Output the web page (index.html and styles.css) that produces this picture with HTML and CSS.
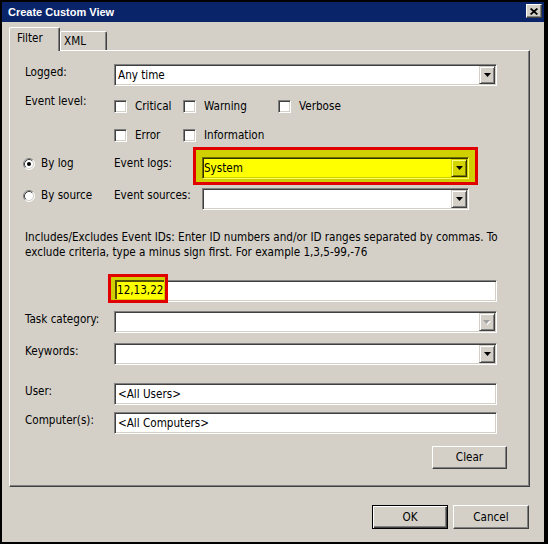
FILE: index.html
```html
<!DOCTYPE html>
<html>
<head>
<meta charset="utf-8">
<title>Create Custom View</title>
<link rel="stylesheet" href="styles.css">
</head>
<body>
<div class="window">
  <div class="titlebar">
    <span class="title">Create Custom View</span>
    <span class="close"><svg width="8" height="7" viewBox="0 0 8 7"><path d="M0.6 0.5L7.4 6.5M7.4 0.5L0.6 6.5" stroke="#000" stroke-width="1.7"/></svg></span>
  </div>
  <div class="tabstrip">
    <div class="tab tab-filter">Filter</div>
    <div class="tab tab-xml">XML</div>
  </div>
  <div class="panel">
    <div class="row r-logged">
      <div class="lbl">Logged:</div>
      <div class="combo w-full"><span class="val">Any time</span><span class="ddbtn"><svg width="7" height="4" viewBox="0 0 7 4"><path d="M0 0H7L3.5 4Z" fill="#000"/></svg></span></div>
    </div>
    <div class="row r-level">
      <div class="lbl lbl-top">Event level:</div>
      <div class="checks">
        <div class="chkrow">
          <div class="chk c1"><span class="box"></span>Critical</div>
          <div class="chk c2"><span class="box"></span>Warning</div>
          <div class="chk"><span class="box"></span>Verbose</div>
        </div>
        <div class="chkrow">
          <div class="chk c1"><span class="box"></span>Error</div>
          <div class="chk c2"><span class="box"></span>Information</div>
        </div>
      </div>
    </div>
    <div class="row r-bylog">
      <div class="radio-lbl rl-log"><svg class="radio" width="12" height="12" viewBox="0 0 12 12"><circle cx="6" cy="6" r="5" fill="#fff"/><path d="M2.11 9.89A5.5 5.5 0 0 1 9.89 2.11" fill="none" stroke="#808080"/><path d="M9.89 2.11A5.5 5.5 0 0 1 2.11 9.89" fill="none" stroke="#fff"/><path d="M2.82 9.18A4.5 4.5 0 0 1 9.18 2.82" fill="none" stroke="#404040"/><path d="M9.18 2.82A4.5 4.5 0 0 1 2.82 9.18" fill="none" stroke="#d4d0c8"/><circle cx="6" cy="6" r="2" fill="#000"/></svg>By log</div>
      <div class="sublbl sl-log">Event logs:</div>
      <div class="hl-box">
        <div class="combo yel"><span class="val">System</span><span class="ddbtn"><svg width="7" height="4" viewBox="0 0 7 4"><path d="M0 0H7L3.5 4Z" fill="#000"/></svg></span></div>
      </div>
    </div>
    <div class="row r-bysrc">
      <div class="radio-lbl rl-src"><svg class="radio" width="12" height="12" viewBox="0 0 12 12"><circle cx="6" cy="6" r="5" fill="#fff"/><path d="M2.11 9.89A5.5 5.5 0 0 1 9.89 2.11" fill="none" stroke="#808080"/><path d="M9.89 2.11A5.5 5.5 0 0 1 2.11 9.89" fill="none" stroke="#fff"/><path d="M2.82 9.18A4.5 4.5 0 0 1 9.18 2.82" fill="none" stroke="#404040"/><path d="M9.18 2.82A4.5 4.5 0 0 1 2.82 9.18" fill="none" stroke="#d4d0c8"/></svg>By source</div>
      <div class="sublbl sl-src">Event sources:</div>
      <div class="combo w-src"><span class="val"></span><span class="ddbtn"><svg width="7" height="4" viewBox="0 0 7 4"><path d="M0 0H7L3.5 4Z" fill="#000"/></svg></span></div>
    </div>
    <p class="desc">Includes/Excludes Event IDs: Enter ID numbers and/or ID ranges separated by commas. To<br>exclude criteria, type a minus sign first. For example 1,3,5-99,-76</p>
    <div class="row r-ids">
      <div class="lbl"></div>
      <div class="field w-full ids">
        <div class="hl-ids"><div class="hl-in"><span>12,13,22</span><span class="caret"></span></div></div>
      </div>
    </div>
    <div class="row r-task">
      <div class="lbl">Task category:</div>
      <div class="combo w-full"><span class="val"></span><span class="ddbtn"><svg width="8" height="5" viewBox="0 0 8 5"><path d="M1 1H8L4.5 5Z" fill="#fff"/><path d="M0 0H7L3.5 4Z" fill="#a0a0a0"/></svg></span></div>
    </div>
    <div class="row r-kw">
      <div class="lbl">Keywords:</div>
      <div class="combo w-full"><span class="val"></span><span class="ddbtn"><svg width="7" height="4" viewBox="0 0 7 4"><path d="M0 0H7L3.5 4Z" fill="#000"/></svg></span></div>
    </div>
    <div class="row r-user">
      <div class="lbl">User:</div>
      <div class="field w-full"><span class="val">&lt;All Users&gt;</span></div>
    </div>
    <div class="row r-comp">
      <div class="lbl">Computer(s):</div>
      <div class="field w-full"><span class="val">&lt;All Computers&gt;</span></div>
    </div>
    <div class="row r-clear">
      <div class="btn btn-clear">Clear</div>
    </div>
  </div>
  <div class="footer">
    <div class="btn btn-default">OK</div>
    <div class="btn">Cancel</div>
  </div>
</div>
</body>
</html>
```
FILE: styles.css
```css
* { box-sizing: border-box; }
html, body { margin: 0; padding: 0; }
body {
  background: #000;
  width: 548px;
  height: 544px;
  overflow: hidden;
  font-family: "DejaVu Sans Condensed", "DejaVu Sans", sans-serif;
  font-size: 11.6px;
  line-height: 13px;
  color: #000;
}
.window {
  margin: 2px 4px 0 2px;
  height: 540px;
  background: #d4d0c8;
  display: flex;
  flex-direction: column;
}
.titlebar {
  height: 20px;
  flex-shrink: 0;
  background: #0a246a;
  display: flex;
  align-items: flex-start;
  padding-left: 6px;
}
.title {
  flex: 1;
  color: #fff;
  font-family: "Liberation Sans", Arial, sans-serif;
  font-weight: bold;
  font-size: 11px;
  line-height: 20px;
}
.close {
  width: 16px;
  height: 14px;
  margin: 2px 2px 0 0;
  background: #d4d0c8;
  border: 1px solid;
  border-color: #fff #404040 #404040 #fff;
  box-shadow: inset -1px -1px #808080;
  display: flex;
  align-items: center;
  justify-content: center;
}
.close svg { display: block; }

.tabstrip {
  display: flex;
  align-items: flex-end;
  height: 23px;
  flex-shrink: 0;
  margin: 5px 0 0 7px;
}
.tab {
  background: #d4d0c8;
  border-top: 1px solid #fff;
  border-left: 1px solid #fff;
  border-right: 1px solid #404040;
  box-shadow: inset -1px 0 #808080;
  border-top-left-radius: 2px;
  border-top-right-radius: 2px;
}
.tab-filter {
  width: 51px;
  height: 24px;
  margin-bottom: -1px;
  position: relative;
  z-index: 1;
  padding: 4px 0 0 7px;
}
.tab-xml {
  width: 47px;
  height: 19px;
  padding: 3px 0 0 3px;
}

.panel {
  margin-left: 7px;
  width: 521px;
  height: 437px;
  flex-shrink: 0;
  border: 1px solid;
  border-color: #fff #404040 #404040 #fff;
  box-shadow: inset -1px -1px #808080;
  padding: 0 0 0 15px;
  display: flex;
  flex-direction: column;
}
.row { display: flex; align-items: flex-start; flex-shrink: 0; }
.lbl { width: 89px; padding-top: 2px; white-space: nowrap; }
.lbl-top { padding-top: 0; }

.r-logged { margin-top: 13px; }
.r-level { margin-top: 9px; height: 47px; }
.r-bylog { margin-top: 5px; height: 38px; }
.r-bysrc { margin-top: 3px; height: 22px; }
.desc { margin: 20px 0 0 0; line-height: 15px; white-space: nowrap; }
.r-ids { margin-top: 20px; }
.r-task { margin-top: 9px; }
.r-kw { margin-top: 10px; }
.r-user { margin-top: 18px; }
.r-comp { margin-top: 7px; }
.r-clear { margin-top: 12px; }

.combo, .field {
  height: 22px;
  background: #fff;
  border: 1px solid;
  border-color: #808080 #fff #fff #808080;
  box-shadow: inset 1px 1px #404040, inset -1px -1px #d4d0c8;
  display: flex;
  align-items: center;
}
.w-full { width: 383px; }
.w-src { width: 267px; }
.val { flex: 1; padding-left: 3px; white-space: nowrap; }
.ddbtn {
  width: 16px;
  height: 18px;
  margin-right: 1px;
  background: #d4d0c8;
  border: 1px solid;
  border-color: #d4d0c8 #404040 #404040 #d4d0c8;
  box-shadow: inset 1px 1px #fff, inset -1px -1px #808080;
  display: flex;
  align-items: center;
  justify-content: center;
}
.ddbtn svg { display: block; }

.checks {
  padding-top: 5px;
  display: flex;
  flex-direction: column;
  gap: 16px;
}
.chkrow { display: flex; height: 13px; }
.chk { display: flex; align-items: center; gap: 8px; white-space: nowrap; }
.c1 { width: 69px; }
.c2 { width: 95px; }
.box {
  width: 13px;
  height: 13px;
  flex-shrink: 0;
  background: #fff;
  border: 1px solid;
  border-color: #808080 #fff #fff #808080;
  box-shadow: inset 1px 1px #404040, inset -1px -1px #d4d0c8;
}

.radio-lbl {
  width: 91px;
  margin-left: -2px;
  display: flex;
  align-items: center;
  gap: 6px;
  white-space: nowrap;
}
.radio { display: block; flex-shrink: 0; }
.rl-log { padding-top: 10px; }
.rl-src { padding-top: 1px; }
.sublbl { white-space: nowrap; }
.sl-log { width: 79px; padding-top: 10px; }
.sl-src { width: 88px; padding-top: 1px; }

.hl-box {
  border: 3px solid #e00000;
  background: #d0d000;
  padding: 7px 6px 3px 6px;
}
.combo.yel {
  width: 267px;
  background: #ffff00;
  border-color: #707000 #ffff60 #ffff60 #707000;
  box-shadow: inset 1px 1px #303000, inset -1px -1px #d0d000;
}
.combo.yel .val { padding-left: 1px; }
.combo.yel .ddbtn {
  background: #d4d400;
  border-color: #d4d400 #303000 #303000 #d4d400;
  box-shadow: inset 1px 1px #ffff80, inset -1px -1px #808000;
}

.ids { position: relative; }
.hl-ids {
  position: absolute;
  left: -7px;
  top: -7px;
  width: 60px;
  height: 29px;
  border: 3px solid #e00000;
  background: #d0d000;
  padding: 3px 1px 1px 4px;
}
.hl-in {
  height: 19px;
  background: #ffff00;
  border-top: 2px solid #505000;
  border-left: 2px solid #505000;
  display: flex;
  align-items: center;
  white-space: nowrap;
}
.caret {
  width: 1px;
  height: 13px;
  background: #000;
  margin-left: 1px;
}

.btn {
  width: 76px;
  height: 24px;
  flex-shrink: 0;
  background: #d4d0c8;
  border: 1px solid;
  border-color: #fff #404040 #404040 #fff;
  box-shadow: inset -1px -1px #808080;
  display: flex;
  align-items: center;
  justify-content: center;
}
.btn-clear { width: 75px; height: 23px; margin-left: 407px; }
.btn-default {
  border-color: #000;
  box-shadow: inset 1px 1px #fff, inset -1px -1px #404040, inset -2px -2px #808080;
}
.footer {
  display: flex;
  justify-content: flex-end;
  gap: 5px;
  margin-top: 18px;
  padding-right: 15px;
  flex-shrink: 0;
}
```
